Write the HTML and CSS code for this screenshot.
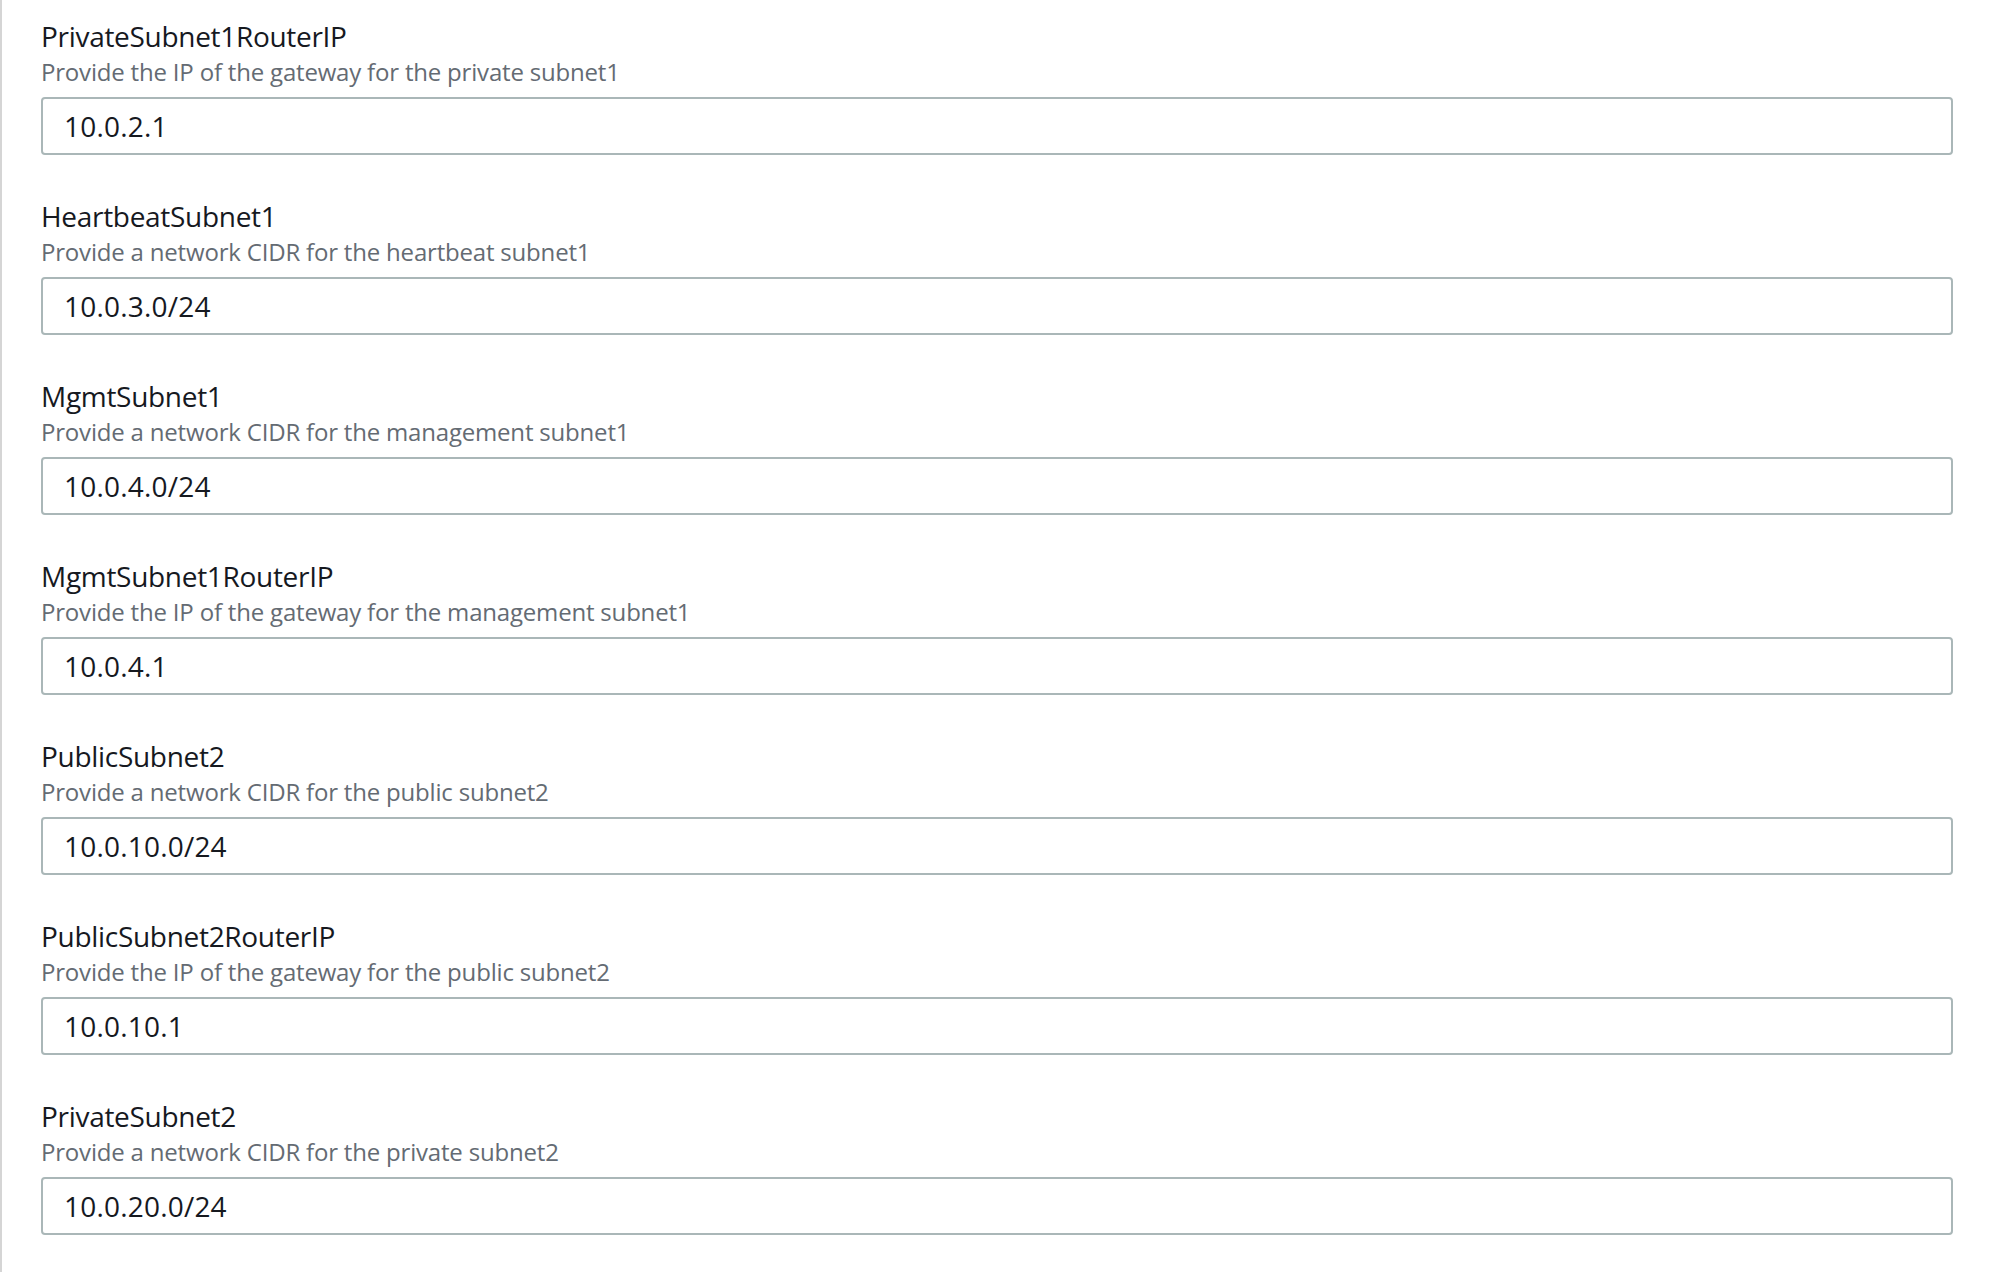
FILE: index.html
```html
<!DOCTYPE html>
<html lang="en">
<head>
<meta charset="utf-8">
<title>Parameters</title>
<link rel="stylesheet" href="styles.css">
</head>
<body>
<div class="panel">
  <div class="field">
    <div class="label">PrivateSubnet1RouterIP</div>
    <div class="desc">Provide the IP of the gateway for the private subnet1</div>
    <div class="input">10.0.2.1</div>
  </div>
  <div class="field">
    <div class="label">HeartbeatSubnet1</div>
    <div class="desc">Provide a network CIDR for the heartbeat subnet1</div>
    <div class="input">10.0.3.0/24</div>
  </div>
  <div class="field">
    <div class="label">MgmtSubnet1</div>
    <div class="desc">Provide a network CIDR for the management subnet1</div>
    <div class="input">10.0.4.0/24</div>
  </div>
  <div class="field">
    <div class="label">MgmtSubnet1RouterIP</div>
    <div class="desc">Provide the IP of the gateway for the management subnet1</div>
    <div class="input">10.0.4.1</div>
  </div>
  <div class="field">
    <div class="label">PublicSubnet2</div>
    <div class="desc">Provide a network CIDR for the public subnet2</div>
    <div class="input">10.0.10.0/24</div>
  </div>
  <div class="field">
    <div class="label">PublicSubnet2RouterIP</div>
    <div class="desc">Provide the IP of the gateway for the public subnet2</div>
    <div class="input">10.0.10.1</div>
  </div>
  <div class="field">
    <div class="label">PrivateSubnet2</div>
    <div class="desc">Provide a network CIDR for the private subnet2</div>
    <div class="input">10.0.20.0/24</div>
  </div>
</div>
</body>
</html>
```
FILE: styles.css
```css
html, body {
  margin: 0;
  padding: 0;
  background: #ffffff;
  overflow: hidden;
}
body {
  font-family: "Open Sans", "Noto Sans", sans-serif;
  color: #16191f;
}
.panel {
  height: 100vh;
  box-sizing: border-box;
  border-left: 2px solid #d5d5d5;
  padding: 16px 41px 0 39px;
  display: flex;
  flex-direction: column;
  gap: 41px;
}
.field {
  display: flex;
  flex-direction: column;
}
.label {
  font-size: 28px;
  line-height: 40px;
  letter-spacing: -0.3px;
  color: #16191f;
}
.desc {
  font-size: 24px;
  line-height: 32px;
  letter-spacing: -0.19px;
  color: #646b73;
}
.input {
  margin-top: 9px;
  height: 58px;
  box-sizing: border-box;
  border: 2px solid #aab7b8;
  border-radius: 4px;
  padding: 0 21px;
  display: flex;
  align-items: center;
  font-size: 28px;
  letter-spacing: 0.2px;
  color: #16191f;
}
```
